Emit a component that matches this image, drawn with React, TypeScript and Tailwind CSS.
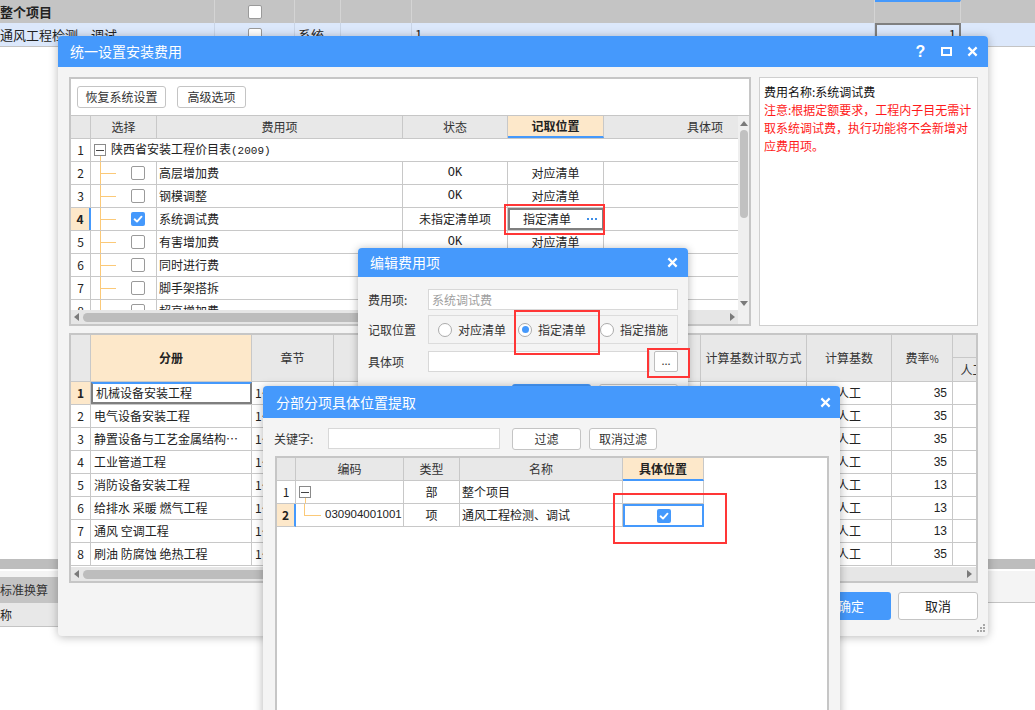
import clsx from "clsx";
import type { ReactNode } from "react";

type Fee = { n: number; name: string; status: string; place: string; checked?: boolean; active?: boolean };

// rows 6-8 sit under the 编辑费用项 window, so their status/place cells are left empty
const fees: Fee[] = [
  { n: 2, name: "高层增加费", status: "OK", place: "对应清单" },
  { n: 3, name: "钢模调整", status: "OK", place: "对应清单" },
  { n: 4, name: "系统调试费", status: "未指定清单项", place: "指定清单", checked: true, active: true },
  { n: 5, name: "有害增加费", status: "OK", place: "对应清单" },
  { n: 6, name: "同时进行费", status: "", place: "" },
  { n: 7, name: "脚手架搭拆", status: "", place: "" },
  { n: 8, name: "超高增加费", status: "", place: "" },
];

const books = [
  ["机械设备安装工程", "35"],
  ["电气设备安装工程", "35"],
  ["静置设备与工艺金属结构…", "35"],
  ["工业管道工程", "35"],
  ["消防设备安装工程", "13"],
  ["给排水 采暖 燃气工程", "13"],
  ["通风 空调工程", "13"],
  ["刷油 防腐蚀 绝热工程", "35"],
];

function Check({ on }: { on?: boolean }) {
  if (on)
    return (
      <span className="flex h-[14px] w-[14px] shrink-0 items-center justify-center rounded-[2px] bg-[#4599fc]">
        <svg viewBox="0 0 14 14" className="h-[14px] w-[14px]">
          <path d="M3.6 7.3l2.4 2.3 4.5-4.9" fill="none" stroke="#fff" strokeWidth="1.9" strokeLinecap="round" strokeLinejoin="round" />
        </svg>
      </span>
    );
  return <span className="block h-[14px] w-[14px] shrink-0 rounded-[2px] border border-[#9a9a9a] bg-white" />;
}

function Minus() {
  return (
    <span className="relative z-10 flex h-[12px] w-[12px] shrink-0 items-center justify-center border border-[#8a8a8a] bg-white">
      <span className="h-px w-[8px] bg-[#444]" />
    </span>
  );
}

function Close() {
  return (
    <svg viewBox="0 0 12 12" className="h-[11px] w-[11px]">
      <path d="M1.5 1.5l9 9M10.5 1.5l-9 9" stroke="#fff" strokeWidth="2.4" />
    </svg>
  );
}

function Tri({ dir }: { dir: "up" | "down" | "left" | "right" }) {
  const d = { up: "M0 5L4 0L8 5Z", down: "M0 0L8 0L4 5Z", left: "M5 0L5 8L0 4Z", right: "M0 0L5 4L0 8Z" }[dir];
  const v = dir === "up" || dir === "down";
  return (
    <svg viewBox={v ? "0 0 8 5" : "0 0 5 8"} className={clsx("shrink-0", v ? "h-[5px] w-[8px]" : "h-[8px] w-[5px]")}>
      <path d={d} fill="#7a7a7a" />
    </svg>
  );
}

function Btn({ className, children }: { className?: string; children: ReactNode }) {
  return (
    <div className={clsx("flex h-[22px] items-center justify-center rounded-[3px] border border-[#c4c4c4] bg-white text-[12px] text-[#333]", className)}>
      {children}
    </div>
  );
}

function Mark({ className }: { className: string }) {
  return <div className={clsx("pointer-events-none absolute border-2 border-[#ff3636]", className)} />;
}

function Radio({ on, label, className }: { on?: boolean; label: string; className?: string }) {
  return (
    <div className={clsx("flex items-center gap-[6px]", className)}>
      <span className="flex h-[14px] w-[14px] items-center justify-center rounded-full border border-[#ababab] bg-white">
        {on && <span className="h-[7px] w-[7px] rounded-full bg-[#4599fc]" />}
      </span>
      <span>{label}</span>
    </div>
  );
}

function Background() {
  return (
    <div className="flex h-full flex-col">
      <div className="flex h-[23px] shrink-0 bg-[#c4c4c4] text-[13px]">
        <div className="flex w-[215px] items-center border-r border-[#d4d4d4] font-bold">整个项目</div>
        <div className="flex w-[80px] items-center border-r border-[#d4d4d4] pl-[33px]">
          <Check />
        </div>
        <div className="w-[46px] border-r border-[#d4d4d4]" />
        <div className="w-[71px] border-r border-[#d4d4d4]" />
        <div className="w-[463px] border-r border-[#d4d4d4]" />
        <div className="w-[86px] border-r border-t-2 border-[#d4d4d4] border-t-[#4599fc]" />
        <div className="flex-1" />
      </div>
      <div className="flex h-[24px] shrink-0 border-b border-[#c4c4c4] bg-[#dce8fb] text-[13px]">
        <div className="flex w-[215px] items-center border-r border-[#c9d5e7]">通风工程检测、调试</div>
        <div className="flex w-[80px] items-center border-r border-[#c9d5e7] pl-[33px]">
          <Check />
        </div>
        <div className="flex w-[46px] items-center border-r border-[#c9d5e7] pl-[3px]">系统</div>
        <div className="w-[71px] border-r border-[#c9d5e7]" />
        <div className="flex w-[463px] items-center border-r border-[#c9d5e7] pl-[3px]">1</div>
        <div className="flex w-[86px] items-center justify-end border-2 border-[#7f7f7f] pr-[3px]">1</div>
        <div className="flex-1" />
      </div>
      <div className="flex-1" />
      <div className="flex h-[151px] shrink-0 flex-col">
        <div className="h-[10px] bg-[#bdbdbd]" />
        <div className="h-[2px]" />
        <div className="flex h-[32px] items-end border-b border-[#c4c4c4] bg-[#f4f4f4]">
          <div className="flex h-[25px] w-[120px] items-center bg-[#c4c4c4] text-[12px] text-[#333]">标准换算</div>
        </div>
        <div className="flex h-[24px] w-[420px] items-center border-b border-[#c4c4c4] bg-[#e8e8e8] text-[12px]">
          <span className="-ml-[12px]">名称</span>
        </div>
      </div>
    </div>
  );
}

function FeeRow({ f }: { f: Fee }) {
  return (
    <div className="flex h-[23px] shrink-0 border-b border-[#c8c8c8]">
      <div
        className={clsx(
          "flex w-[20px] shrink-0 items-center justify-center",
          f.active ? "border-r-2 border-r-[#4599fc] bg-[#fde8ca] font-bold" : "border-r border-[#c8c8c8]"
        )}
      >
        {f.n}
      </div>
      <div className="relative flex w-[66px] shrink-0 items-center border-r border-[#c8c8c8] pl-[40px]">
        <span className="absolute bottom-0 left-[9px] top-0 w-px bg-[#fbc978]" />
        <span className="absolute left-[9px] top-[11px] h-px w-[16px] bg-[#fbc978]" />
        <Check on={f.checked} />
      </div>
      <div className="flex w-[246px] shrink-0 items-center border-r border-[#c8c8c8] pl-[2px]">{f.name}</div>
      <div className="flex w-[105px] shrink-0 items-center justify-center border-r border-[#c8c8c8] font-['Liberation_Mono','Noto_Sans_CJK_SC',monospace] text-[12px]">
        {f.status === "OK" || !f.status ? f.status : <span className="font-['Noto_Sans_CJK_SC',sans-serif]">{f.status}</span>}
      </div>
      {f.active ? (
        <div className="flex w-[96px] shrink-0 items-center justify-between border-2 border-[#7f7f7f] pl-[13px] pr-[5px]">
          <span>{f.place}</span>
          <span className="flex gap-[2px]">
            <span className="h-[2px] w-[2px] bg-[#3d8ee8]" />
            <span className="h-[2px] w-[2px] bg-[#3d8ee8]" />
            <span className="h-[2px] w-[2px] bg-[#3d8ee8]" />
          </span>
        </div>
      ) : (
        <div className="flex w-[96px] shrink-0 items-center justify-center border-r border-[#c8c8c8]">{f.place}</div>
      )}
      <div className="w-[134px] shrink-0" />
    </div>
  );
}

function FeeBox() {
  return (
    <div className="flex w-[682px] shrink-0 flex-col border-2 border-[#c6c6c6] bg-white">
      <div className="flex h-[37px] shrink-0 gap-[11px] border-b border-[#c6c6c6] pl-[6px] pt-[7px]">
        <Btn className="w-[89px]">恢复系统设置</Btn>
        <Btn className="w-[69px]">高级选项</Btn>
      </div>
      <div className="flex h-[194px] shrink-0">
        <div className="flex w-[667px] flex-col overflow-hidden">
          <div className="flex h-[23px] shrink-0 border-b border-[#c8c8c8] bg-[#e8e8e8] text-[#333]">
            <div className="w-[20px] shrink-0 border-r border-[#c8c8c8]" />
            <div className="flex w-[66px] shrink-0 items-center justify-center border-r border-[#c8c8c8]">选择</div>
            <div className="flex w-[246px] shrink-0 items-center justify-center border-r border-[#c8c8c8]">费用项</div>
            <div className="flex w-[105px] shrink-0 items-center justify-center border-r border-[#c8c8c8]">状态</div>
            <div className="flex w-[96px] shrink-0 items-center justify-center border-b-2 border-r border-[#c8c8c8] border-b-[#4599fc] bg-[#fde8ca] font-bold text-[#222]">
              记取位置
            </div>
            <div className="flex w-[134px] shrink-0 items-center pl-[83px]">具体项</div>
          </div>
          <div className="flex h-[23px] shrink-0 border-b border-[#c8c8c8]">
            <div className="flex w-[20px] shrink-0 items-center justify-center border-r border-[#c8c8c8]">1</div>
            <div className="relative flex flex-1 items-center gap-[5px] pl-[3px]">
              <Minus />
              <span>
                陕西省安装工程价目表<span className="font-['Liberation_Mono',monospace] text-[11px]">(2009)</span>
              </span>
              <span className="absolute bottom-0 left-[9px] top-[17px] w-px bg-[#fbc978]" />
            </div>
          </div>
          {fees.map((f) => (
            <FeeRow key={f.n} f={f} />
          ))}
        </div>
        <div className="flex w-[11px] shrink-0 flex-col items-center bg-[#efefef] pb-[4px] pt-[5px]">
          <Tri dir="up" />
          <div className="mt-[4px] h-[88px] w-[8px] rounded-full bg-[#c1c1c1]" />
          <div className="flex-1" />
          <Tri dir="down" />
        </div>
      </div>
      <div className="flex h-[14px] shrink-0 items-center bg-[#e6e6e6] pl-[3px]">
        <Tri dir="left" />
        <div className="ml-[4px] h-[9px] w-[420px] rounded-full bg-[#bdbdbd]" />
        <div className="flex-1" />
        <Tri dir="right" />
        <div className="ml-[3px] h-full w-[11px] bg-[#f0f0f0]" />
      </div>
    </div>
  );
}

function Notes() {
  return (
    <div className="flex-1 whitespace-nowrap border border-[#cfcfcf] bg-white pl-[4px] pt-[5px] text-[12px] leading-[18px]">
      <div className="text-[#111]">费用名称:系统调试费</div>
      <div className="text-[#ff1a1a]">
        注意:根据定额要求，工程内子目无需计
        <br />
        取系统调试费，执行功能将不会新增对
        <br />
        应费用项。
      </div>
    </div>
  );
}

function BookTable() {
  return (
    <div className="mt-[7px] flex h-[250px] shrink-0 flex-col overflow-hidden border-2 border-[#c6c6c6] bg-white">
      <div className="flex h-[47px] shrink-0 border-b border-[#c8c8c8] bg-[#e8e8e8] text-[#333]">
        <div className="w-[20px] shrink-0 border-r border-[#c8c8c8]" />
        <div className="flex w-[161px] shrink-0 items-center justify-center border-r border-[#c8c8c8] bg-[#fde8ca] font-bold text-[#222]">
          分册
        </div>
        <div className="flex w-[82px] shrink-0 items-center justify-center border-r border-[#c8c8c8]">章节</div>
        <div className="w-[136px] shrink-0 border-r border-[#c8c8c8]" />
        <div className="w-[120px] shrink-0 border-r border-[#c8c8c8]" />
        <div className="w-[111px] shrink-0 border-r border-[#c8c8c8]" />
        <div className="flex w-[106px] shrink-0 items-center justify-center border-r border-[#c8c8c8]">计算基数计取方式</div>
        <div className="flex w-[85px] shrink-0 items-center justify-center border-r border-[#c8c8c8]">计算基数</div>
        <div className="flex w-[61px] shrink-0 items-center justify-center border-r border-[#c8c8c8]">
          费率<span className="text-[10px]">%</span>
        </div>
        <div className="flex w-[40px] shrink-0 flex-col border-r border-[#c8c8c8]">
          <div className="h-[23px] border-b border-[#c8c8c8]" />
          <div className="flex flex-1 items-center justify-center">人工</div>
        </div>
      </div>
      {books.map(([name, rate], i) => (
        <div key={name} className="flex h-[23px] shrink-0 border-b border-[#c8c8c8]">
          <div
            className={clsx(
              "flex w-[20px] shrink-0 items-center justify-center border-r border-[#c8c8c8]",
              i === 0 && "bg-[#fde8ca] font-bold"
            )}
          >
            {i + 1}
          </div>
          <div
            className={clsx(
              "flex w-[161px] shrink-0 items-center whitespace-nowrap pl-[3px]",
              i === 0 ? "border-2 border-[#7f7f7f] border-t-[#4599fc]" : "border-r border-[#c8c8c8]"
            )}
          >
            {name}
          </div>
          <div className="flex w-[82px] shrink-0 items-center overflow-hidden whitespace-nowrap border-r border-[#c8c8c8] pl-[3px]">1~</div>
          <div className="w-[136px] shrink-0 border-r border-[#c8c8c8]" />
          <div className="w-[120px] shrink-0 border-r border-[#c8c8c8]" />
          <div className="w-[111px] shrink-0 border-r border-[#c8c8c8]" />
          <div className="w-[106px] shrink-0 border-r border-[#c8c8c8]" />
          <div className="flex w-[85px] shrink-0 items-center justify-center border-r border-[#c8c8c8]">人工</div>
          <div className="flex w-[61px] shrink-0 items-center justify-end border-r border-[#c8c8c8] pr-[5px] font-['Liberation_Sans',sans-serif]">
            {rate}
          </div>
          <div className="w-[40px] shrink-0 border-r border-[#c8c8c8]" />
        </div>
      ))}
      <div className="flex-1" />
      <div className="flex h-[14px] shrink-0 items-center bg-[#e6e6e6] pl-[3px] pr-[4px]">
        <Tri dir="left" />
        <div className="ml-[4px] h-[9px] w-[560px] rounded-full bg-[#bdbdbd]" />
        <div className="flex-1" />
        <Tri dir="right" />
      </div>
    </div>
  );
}

function MainDialog() {
  return (
    <div className="absolute left-[58px] top-[36px] flex h-[600px] w-[930px] flex-col rounded-[4px] bg-[#f4f4f4] shadow-[0_1px_10px_rgba(0,0,0,0.28)]">
      <div className="flex h-[31px] shrink-0 items-center rounded-t-[4px] bg-[#4599fc] pl-[12px] pr-[10px] text-[14px] text-white">
        <span>统一设置安装费用</span>
        <div className="ml-auto flex items-center gap-[15px]">
          <span className="w-[11px] text-center font-['Liberation_Sans',sans-serif] text-[16px] font-bold leading-none">?</span>
          <svg viewBox="0 0 11 9" className="h-[9px] w-[11px]">
            <rect x="1" y="1" width="9" height="7" fill="none" stroke="#fff" strokeWidth="2" />
          </svg>
          <Close />
        </div>
      </div>
      <div className="flex flex-1 flex-col pl-[11px] pr-[10px] pt-[10px]">
        <div className="flex h-[249px] shrink-0 gap-[8px]">
          <FeeBox />
          <Notes />
        </div>
        <BookTable />
        <div className="mt-[9px] flex justify-end gap-[7px]">
          <div className="flex h-[28px] w-[80px] items-center justify-center rounded-[3px] bg-[#4599fc] text-[13px] text-white">确定</div>
          <div className="flex h-[28px] w-[80px] items-center justify-center rounded-[3px] border border-[#c4c4c4] bg-white text-[13px]">取消</div>
        </div>
      </div>
      <svg viewBox="0 0 8 8" className="absolute bottom-[4px] right-[3px] h-[8px] w-[8px]">
        <rect x="6" y="0" width="2" height="2" fill="#a8a8a8" />
        <rect x="3" y="3" width="2" height="2" fill="#a8a8a8" />
        <rect x="6" y="3" width="2" height="2" fill="#a8a8a8" />
        <rect x="0" y="6" width="2" height="2" fill="#a8a8a8" />
        <rect x="3" y="6" width="2" height="2" fill="#a8a8a8" />
        <rect x="6" y="6" width="2" height="2" fill="#a8a8a8" />
      </svg>
    </div>
  );
}

function EditDialog() {
  return (
    <div className="absolute left-[358px] top-[248px] flex h-[170px] w-[330px] flex-col rounded-[4px] bg-[#f4f4f4] shadow-[0_1px_8px_rgba(0,0,0,0.3)]">
      <div className="flex h-[29px] shrink-0 items-center rounded-t-[4px] bg-[#4599fc] pl-[12px] pr-[10px] text-[14px] text-white">
        <span>编辑费用项</span>
        <span className="ml-auto flex">
          <Close />
        </span>
      </div>
      <div className="flex flex-col px-[10px] pt-[12px] text-[12px] text-[#333]">
        <div className="flex h-[21px] items-center">
          <span className="w-[60px]">费用项:</span>
          <div className="flex h-full flex-1 items-center border border-[#d8d8d8] bg-white pl-[3px] text-[#a0a0a0]">系统调试费</div>
        </div>
        <div className="mt-[5px] flex h-[29px] items-center">
          <span className="w-[60px]">记取位置</span>
          <div className="flex h-full flex-1 items-center border border-[#dcdcdc] pl-[9px]">
            <Radio label="对应清单" />
            <Radio on label="指定清单" className="ml-[12px]" />
            <Radio label="指定措施" className="ml-[14px]" />
          </div>
        </div>
        <div className="mt-[7px] flex h-[21px] items-center">
          <span className="w-[60px]">具体项</span>
          <div className="h-full flex-1 border border-[#d8d8d8] bg-white" />
          <div className="ml-[4px] flex h-[21px] w-[24px] items-center justify-center rounded-[2px] border border-[#bdbdbd] bg-white pb-[3px] text-[11px] leading-none">
            ...
          </div>
        </div>
        <div className="mt-[12px] flex gap-[8px] pl-[144px]">
          <div className="h-[26px] w-[80px] rounded-[3px] bg-[#4599fc]" />
          <div className="h-[26px] w-[80px] rounded-[3px] border border-[#c4c4c4] bg-white" />
        </div>
      </div>
    </div>
  );
}

function PickDialog() {
  return (
    <div className="absolute left-[263px] top-[386px] flex h-[340px] w-[577px] flex-col rounded-t-[4px] bg-[#f4f4f4] shadow-[0_1px_10px_rgba(0,0,0,0.3)]">
      <div className="flex h-[32px] shrink-0 items-center rounded-t-[4px] bg-[#4599fc] pl-[13px] pr-[9px] text-[14px] text-white">
        <span>分部分项具体位置提取</span>
        <span className="ml-auto flex">
          <Close />
        </span>
      </div>
      <div className="flex flex-1 flex-col pl-[11px] pr-[9px] pt-[10px]">
        <div className="flex h-[21px] shrink-0 items-center text-[12px] text-[#333]">
          <span className="w-[54px]">关键字:</span>
          <div className="h-full w-[172px] border border-[#d8d8d8] bg-white" />
          <Btn className="ml-[12px] h-[21px] w-[69px]">过滤</Btn>
          <Btn className="ml-[8px] h-[21px] w-[68px]">取消过滤</Btn>
        </div>
        <div className="ml-[1px] mt-[7px] flex w-[554px] flex-1 flex-col border-2 border-[#c6c6c6] bg-white">
          <div className="flex h-[23px] shrink-0 text-[#333]">
            <div className="w-[19px] shrink-0 border-b border-r border-[#c8c8c8] bg-[#e8e8e8]" />
            <div className="flex w-[108px] shrink-0 items-center justify-center border-b border-r border-[#c8c8c8] bg-[#e8e8e8]">编码</div>
            <div className="flex w-[56px] shrink-0 items-center justify-center border-b border-r border-[#c8c8c8] bg-[#e8e8e8]">类型</div>
            <div className="flex w-[163px] shrink-0 items-center justify-center border-b border-r border-[#c8c8c8] bg-[#e8e8e8]">名称</div>
            <div className="flex w-[81px] shrink-0 items-center justify-center border-b-2 border-r border-[#c8c8c8] border-b-[#4599fc] bg-[#fde8ca] font-bold text-[#222]">
              具体位置
            </div>
          </div>
          <div className="flex h-[23px] shrink-0">
            <div className="flex w-[19px] shrink-0 items-center justify-center border-b border-r border-[#c8c8c8]">1</div>
            <div className="relative flex w-[108px] shrink-0 items-center border-b border-r border-[#c8c8c8] pl-[3px]">
              <Minus />
              <span className="absolute bottom-0 left-[9px] top-[17px] w-px bg-[#fbc978]" />
            </div>
            <div className="flex w-[56px] shrink-0 items-center justify-center border-b border-r border-[#c8c8c8]">部</div>
            <div className="flex w-[163px] shrink-0 items-center border-b border-r border-[#c8c8c8] pl-[2px]">整个项目</div>
            <div className="w-[81px] shrink-0 border-b border-r border-[#c8c8c8]" />
          </div>
          <div className="flex h-[23px] shrink-0">
            <div className="flex w-[19px] shrink-0 items-center justify-center border-b border-r-2 border-[#c8c8c8] border-r-[#4599fc] bg-[#fde8ca] font-bold">
              2
            </div>
            <div className="relative flex w-[108px] shrink-0 items-center border-b border-r border-[#c8c8c8] pl-[29px] font-['Liberation_Sans',sans-serif] text-[11.5px]">
              <span className="absolute left-[8px] top-0 h-[11px] w-px bg-[#fbc978]" />
              <span className="absolute left-[8px] top-[11px] h-px w-[17px] bg-[#fbc978]" />
              030904001001
            </div>
            <div className="flex w-[56px] shrink-0 items-center justify-center border-b border-r border-[#c8c8c8]">项</div>
            <div className="flex w-[163px] shrink-0 items-center border-b border-r border-[#c8c8c8] pl-[2px]">通风工程检测、调试</div>
            <div className="flex w-[81px] shrink-0 items-center justify-center border-2 border-[#4599fc]">
              <Check on />
            </div>
          </div>
        </div>
      </div>
    </div>
  );
}

export default function App() {
  return (
    <div className="relative h-[710px] w-[1035px] overflow-hidden bg-white font-['Noto_Sans_CJK_SC','Noto_Sans',sans-serif] text-[12px] text-[#222]">
      <Background />
      <MainDialog />
      <EditDialog />
      <PickDialog />
      <Mark className="left-[504px] top-[204px] h-[31px] w-[101px]" />
      <Mark className="left-[514px] top-[310px] h-[45px] w-[86px]" />
      <Mark className="left-[647px] top-[348px] h-[30px] w-[43px]" />
      <Mark className="left-[613px] top-[493px] h-[51px] w-[114px]" />
    </div>
  );
}
